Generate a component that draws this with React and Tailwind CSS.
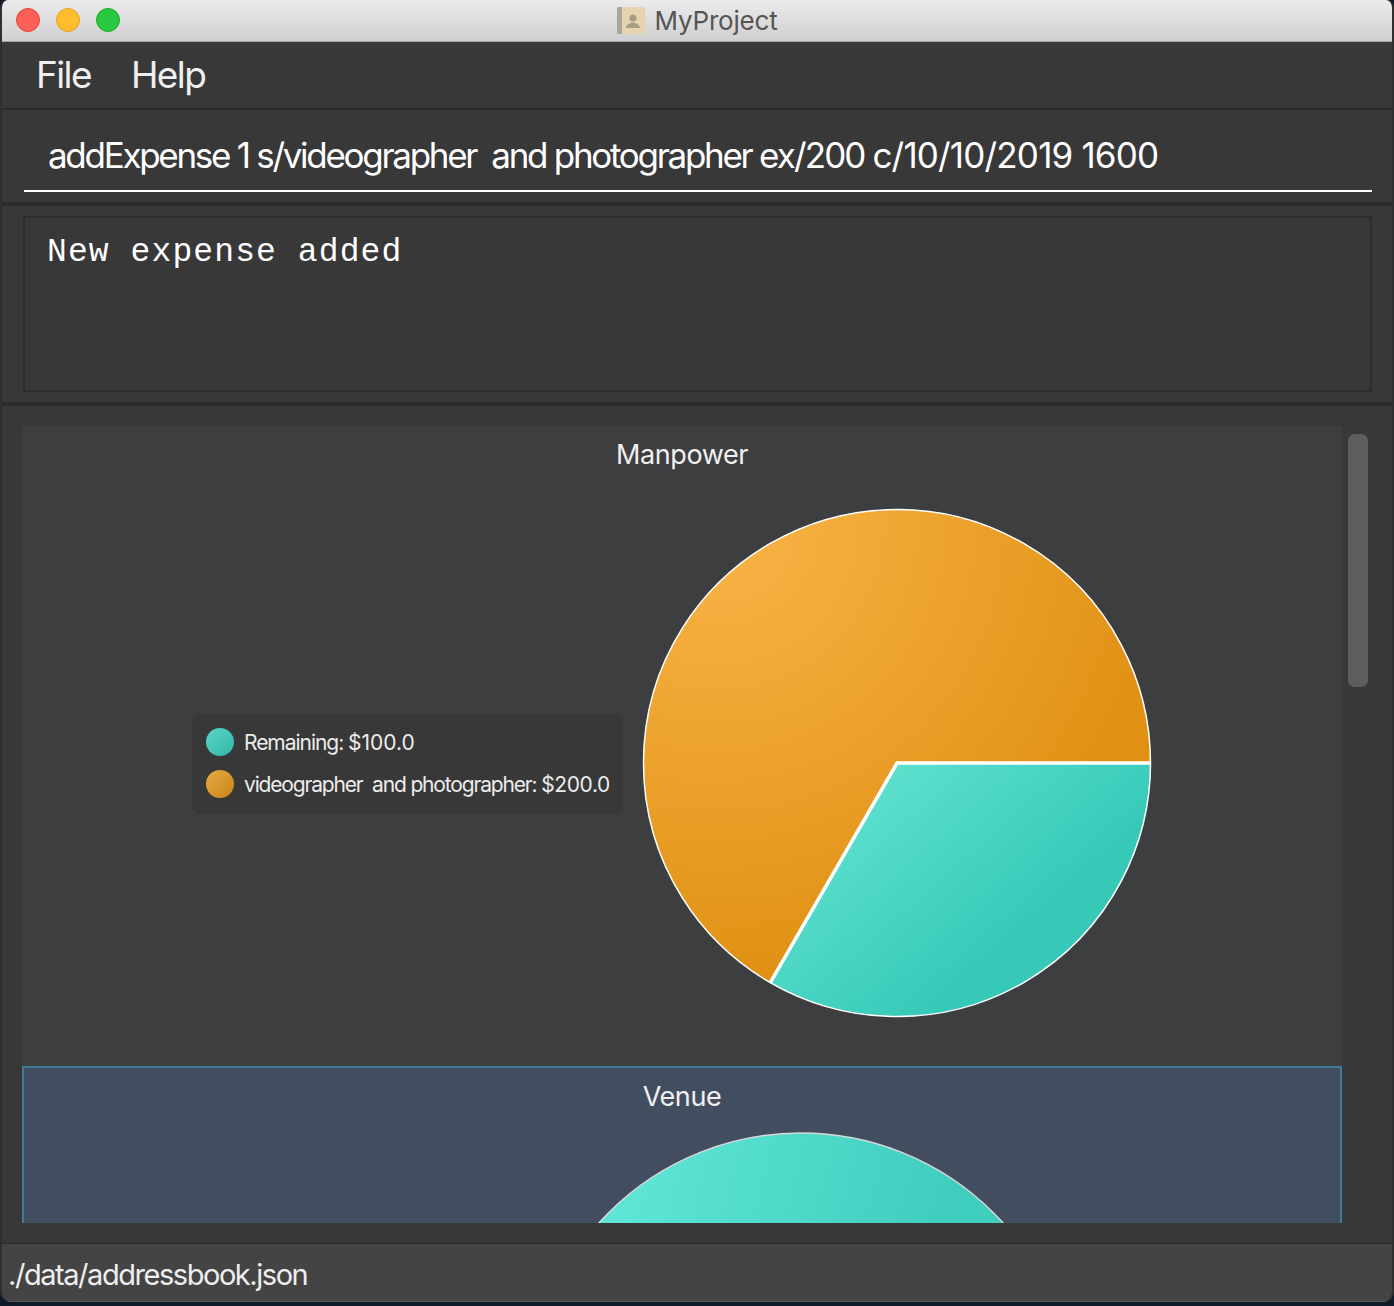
import React from "react";

const sans = "font-['Inter','Liberation_Sans',sans-serif]";

function Pie({ size, r, idA, idB }) {
  const c = size / 2;
  const ex = c + r * Math.cos((120 * Math.PI) / 180);
  const ey = c + r * Math.sin((120 * Math.PI) / 180);
  return (
    <svg width={size} height={size} viewBox={`0 0 ${size} ${size}`} className="block shrink-0">
      <defs>
        <radialGradient id={idA} gradientUnits="userSpaceOnUse" cx={c - 180} cy={c - 240} r="460">
          <stop offset="0.1" stopColor="#f7b143" />
          <stop offset="1" stopColor="#e09114" />
        </radialGradient>
        <linearGradient id={idB} gradientUnits="userSpaceOnUse" x1={c - 10} y1={c + 10} x2={c + 125} y2={c + 165}>
          <stop offset="0" stopColor="#5ce0ce" />
          <stop offset="1" stopColor="#37c9b8" />
        </linearGradient>
      </defs>
      <path d={`M${c} ${c} L${c + r} ${c} A${r} ${r} 0 0 1 ${ex} ${ey} Z`} fill={`url(#${idB})`} stroke="#fff" strokeWidth="1.5" strokeLinejoin="round" />
      <path d={`M${c} ${c} L${ex} ${ey} A${r} ${r} 0 1 1 ${c + r} ${c} Z`} fill={`url(#${idA})`} stroke="#fff" strokeWidth="1.5" strokeLinejoin="round" />
      <path d={`M${c + r} ${c} L${c} ${c} L${ex} ${ey}`} fill="none" stroke="#fff" strokeWidth="3.5" />
    </svg>
  );
}

function VenuePie() {
  return (
    <svg width="550" height="92" viewBox="0 0 550 92" className="block shrink-0">
      <defs>
        <linearGradient id="venueTeal" gradientUnits="userSpaceOnUse" x1="90" y1="30" x2="420" y2="120">
          <stop offset="0" stopColor="#5fe6d6" />
          <stop offset="1" stopColor="#3fcdbd" />
        </linearGradient>
      </defs>
      <circle cx="275" cy="273" r="272" fill="url(#venueTeal)" stroke="#d8d8d8" strokeWidth="1.5" />
    </svg>
  );
}

export default function App() {
  return (
    <div className={`w-[1394px] h-[1306px] bg-[#0d1a29] overflow-hidden ${sans}`}>
      <div className="h-[1302px] w-[1394px] flex flex-col rounded-t-[8px] rounded-b-[10px] overflow-hidden border-x-2 border-[#2f2f2f]">
        {/* Title bar */}
        <div className="-mx-[2px] h-[42px] shrink-0 relative flex items-center justify-center gap-[10px] bg-linear-to-b from-[#ebebeb] to-[#d0d0d0] border-b border-[#a8a8a8]">
          <div className="absolute left-[16px] top-[8px] flex gap-[16px]">
            <span className="w-[24px] h-[24px] rounded-full bg-[#ff5f57] border border-[#e0443e]" />
            <span className="w-[24px] h-[24px] rounded-full bg-[#ffbd2e] border border-[#dea123]" />
            <span className="w-[24px] h-[24px] rounded-full bg-[#28c940] border border-[#1aab29]" />
          </div>
          <svg width="28" height="27" viewBox="0 0 28 27" className="shrink-0">
            <rect x="0" y="0" width="28" height="27" rx="1.5" fill="#e6d4b0" />
            <rect x="0" y="0" width="5" height="27" rx="1" fill="#a8a69f" />
            <circle cx="16" cy="11" r="3.6" fill="#a89c86" />
            <path d="M9 21 C9 17 13 17 14.5 15.5 L17.5 15.5 C19 17 23 17 23 21 Z" fill="#a89c86" />
          </svg>
          <span className="text-[26px] leading-[30px] text-[#555555] tracking-[-0.2px]">MyProject</span>
        </div>

        {/* Menu */}
        <div className="h-[66px] shrink-0 bg-[#383838] flex items-center pl-[34px] gap-[40px] text-[37px] tracking-[-1.6px] text-[#f0f0f0]">
          <span>File</span>
          <span>Help</span>
        </div>
        <div className="h-[2px] shrink-0 bg-[#2b2b2b]" />

        {/* Command box */}
        <div className="h-[92px] shrink-0 bg-[#383838] pl-[22px] pr-[20px] pt-[22px]">
          <div className="h-[60px] border-b-2 border-white pl-[24px] flex items-start">
            <span className="text-[35px] leading-[47px] text-white whitespace-pre">
              <span className="tracking-[-2.29px]">addExpense 1 s/videographer  and photographer </span>
              <span className="tracking-[-1.9px]">ex/200 </span>
              <span className="tracking-[-0.82px]">c/10/10/2019 1600</span>
            </span>
          </div>
        </div>
        <div className="h-[4px] shrink-0 bg-[#2b2b2b]" />

        {/* Result box */}
        <div className="h-[196px] shrink-0 bg-[#383838] pl-[21px] pr-[20px] pt-[10px]">
          <div className="h-[176px] border-2 border-[#2d2d2d] pl-[22px] pt-[16px]">
            <span className="font-['Liberation_Mono',monospace] text-[33px] leading-[38px] tracking-[1.1px] text-white whitespace-pre">New expense added</span>
          </div>
        </div>
        <div className="h-[4px] shrink-0 bg-[#2b2b2b]" />

        {/* List */}
        <div className="flex-1 min-h-0 bg-[#383838] flex pl-[20px] pt-[20px]">
          <div className="w-[1320px] h-[797px] overflow-hidden shrink-0">
            <div className="h-[640px] bg-[#3c3e40] flex flex-col">
              <div className="h-[82px] pt-[12px] text-center text-[27px] leading-[33px] tracking-[-0.4px] text-[#f0f0f0]">Manpower</div>
              <div className="flex items-start pl-[170px]">
                <div className="mt-[206px] w-[431px] h-[100px] shrink-0 rounded-[8px] bg-[#383838] pl-[14px] pt-[14px] flex flex-col gap-[14px] text-[21px] leading-[30px] text-[#ececec] whitespace-pre">
                  <div className="h-[28px] flex items-start gap-[10px]">
                    <span className="w-[28px] h-[28px] rounded-full bg-linear-to-br from-[#5cd6c8] to-[#2fb5a6] shrink-0" />
                    <span>
                      <span className="tracking-[-1.04px]">Remaining: </span>
                      <span className="tracking-[0px]">$100.0</span>
                    </span>
                  </div>
                  <div className="h-[28px] flex items-start gap-[10px]">
                    <span className="w-[28px] h-[28px] rounded-full bg-linear-to-br from-[#e8aa44] to-[#c98512] shrink-0" />
                    <span>
                      <span className="tracking-[-1.165px]">videographer  and photographer: </span>
                      <span className="tracking-[-0.37px]">$200.0</span>
                    </span>
                  </div>
                </div>
                <div className="ml-[18px] -mt-[1px]">
                  <Pie size={512} r={253.5} idA="oA" idB="oB" />
                </div>
              </div>
            </div>
            <div className="h-[157px] bg-[#424e60] border-x-2 border-t-2 border-[#3a7d95] flex flex-col">
              <div className="h-[64px] pt-[12px] text-center text-[27px] leading-[33px] tracking-[-0.4px] text-[#f0f0f0]">Venue</div>
              <div className="pl-[502px] overflow-hidden">
                <VenuePie />
              </div>
            </div>
          </div>
          <div className="ml-[6px] mt-[8px] w-[20px] h-[253px] rounded-[7px] bg-[#5e5e5e] shrink-0" />
        </div>
        <div className="h-[1px] shrink-0 bg-[#2b2b2b]" />

        {/* Status bar */}
        <div className="h-[58px] shrink-0 bg-[#444444] border-b border-[#5a5a5a] pl-[6px] pt-[4px] flex items-center text-[29px] tracking-[-1.45px] text-[#eeeeee]">
          ./data/addressbook.json
        </div>
      </div>
    </div>
  );
}
